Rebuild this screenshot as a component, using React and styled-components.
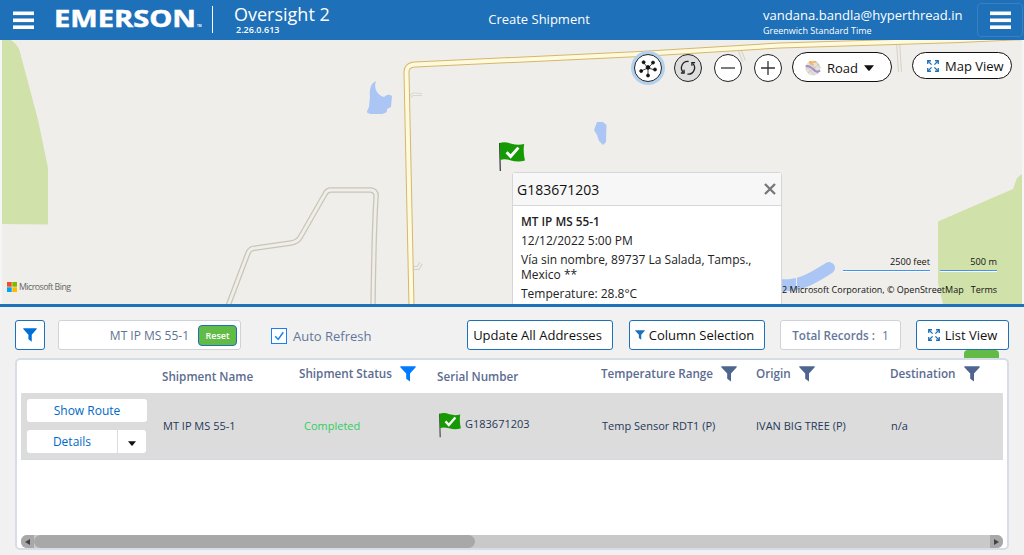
import React from "react";
import styled, { createGlobalStyle } from "styled-components";

const GlobalStyle = createGlobalStyle`
  * { box-sizing: border-box; }
  body {
    margin: 0;
    background: #f1f1f1;
    font-family: "Open Sans", sans-serif;
    font-size: 13px;
    color: #111;
  }
  button { font-family: inherit; margin: 0; padding: 0; white-space: nowrap; }
`;

const Page = styled.div`
  display: flex;
  flex-direction: column;
  width: 1024px;
  height: 555px;
  overflow: hidden;
`;

/* ---------- header ---------- */

const Header = styled.header`
  display: flex;
  align-items: flex-start;
  height: 40px;
  background: #1e70b8;
  color: #fff;
  flex: none;
`;

const MenuButton = styled.button`
  display: flex;
  align-items: center;
  justify-content: center;
  width: ${(p) => (p.$framed ? "46px" : "21px")};
  height: ${(p) => (p.$framed ? "34px" : "18px")};
  margin: ${(p) => (p.$framed ? "3px 0 0 0" : "11px 0 0 13px")};
  border: ${(p) => (p.$framed ? "1px solid #3a7fc0" : "none")};
  border-radius: 4px;
  background: transparent;
`;

const Logo = styled.svg`
  width: 150px;
  height: 40px;
  margin-left: 20px;
  fill: #fff;
  text {
    font-family: "Open Sans", sans-serif;
    font-weight: 700;
  }
`;

const Divider = styled.div`
  width: 1px;
  height: 27px;
  margin: 6px 0 0 8px;
  background: #fff;
`;

const Brand = styled.div`
  width: 230px;
  margin-left: 21px;
`;

const Product = styled.div`
  height: 25px;
  line-height: 29px;
  font-size: 18px;
`;

const Version = styled.div`
  padding-left: 2px;
  height: 10px;
  line-height: 10px;
  font-size: 9px;
  font-weight: 600;
`;

const PageTitle = styled.div`
  width: 150px;
  height: 40px;
  line-height: 39px;
  text-align: center;
  font-size: 13px;
`;

const Account = styled.div`
  width: 214px;
  margin-left: 149px;
`;

const Email = styled.div`
  height: 24px;
  line-height: 31px;
  font-size: 13.05px;
`;

const Zone = styled.div`
  height: 13px;
  line-height: 14px;
  font-size: 9px;
  font-weight: 500;
`;

/* ---------- map ---------- */

const MapArea = styled.section`
  position: relative;
  height: 267px;
  flex: none;
  overflow: hidden;
  background: #efeeea;
  border-bottom: 3px solid #1e70b8;
`;

const MapCanvas = styled.svg`
  position: absolute;
  left: 0;
  top: 0;
`;

const MapControls = styled.div`
  position: absolute;
  top: 12px;
  right: 12px;
  display: flex;
  align-items: flex-start;
  gap: 12px;
`;

const RoundButton = styled.button`
  display: flex;
  align-items: center;
  justify-content: center;
  width: 28px;
  height: 28px;
  margin-top: 2px;
  border: 1px solid #222;
  border-radius: 50%;
  background: ${(p) => (p.$muted ? "#dedede" : "#fff")};
  box-shadow: ${(p) => (p.$active ? "0 0 0 3px #b3d1ef" : "none")};
`;

const PillButton = styled.button`
  display: flex;
  align-items: center;
  width: 100px;
  height: ${(p) => p.$h}px;
  margin-left: ${(p) => p.$ml}px;
  padding-left: ${(p) => p.$pl}px;
  padding-top: ${(p) => p.$pt || 0}px;
  gap: ${(p) => p.$gap}px;
  border: 1px solid #111;
  border-radius: 16px;
  background: #fff;
  font-size: ${(p) => p.$fs}px;
  color: #111;
`;

const MapFlag = styled.div`
  position: absolute;
  left: 498px;
  top: 101px;
`;

const BingMark = styled.div`
  position: absolute;
  left: 7px;
  top: 241px;
  display: flex;
  align-items: center;
  gap: 2px;
  height: 12px;
  font-size: 8.8px;
  letter-spacing: -0.55px;
  color: #666;
`;

const ScaleBars = styled.div`
  position: absolute;
  right: 27px;
  top: 215px;
  display: flex;
  gap: 10px;
`;

const ScaleBar = styled.div`
  width: ${(p) => p.$w}px;
  height: 17px;
  line-height: 13px;
  text-align: right;
  font-size: 9.2px;
  color: #111;
  border-bottom: 1px solid #fff;
  box-shadow: inset 0 -1px 0 #3c96f0;
`;

const Copyright = styled.div`
  position: absolute;
  right: 27px;
  top: 243px;
  display: flex;
  gap: 7px;
  height: 13px;
  line-height: 13px;
  font-size: 9px;
  white-space: nowrap;
  color: #111;
`;

const InfoCard = styled.article`
  position: absolute;
  left: 512px;
  top: 132px;
  width: 270px;
  height: 150px;
  border: 1px solid #d6d6d6;
  border-radius: 3px;
  background: #fff;
`;

const CardHead = styled.div`
  display: flex;
  align-items: center;
  justify-content: space-between;
  height: 33px;
  padding: 0 5px 0 4px;
  border-bottom: 1px solid #d6d6d6;
  background: #f7f7f7;
  font-size: 14px;
  font-weight: 500;
`;

const CardBody = styled.div`
  padding: 7px 8px;
  font-size: 12px;
  color: #222;
`;

const CardLine = styled.div`
  line-height: 15px;
  margin-bottom: 4px;
  padding-top: ${(p) => (p.$first ? "1px" : "0")};
  font-size: ${(p) => (p.$first ? 11.75 : 12)}px;
  font-weight: ${(p) => (p.$first ? 600 : 400)};
  white-space: pre-line;
`;

/* ---------- toolbar ---------- */

const Toolbar = styled.div`
  display: flex;
  align-items: flex-start;
  height: 51px;
  padding: 13px 15px 0;
  flex: none;
`;

const ToolButton = styled.button`
  display: flex;
  align-items: center;
  justify-content: center;
  gap: ${(p) => p.$gap || 4}px;
  width: ${(p) => p.$w}px;
  height: 30px;
  margin-left: ${(p) => p.$ml || 0}px;
  padding-right: ${(p) => p.$pr || 0}px;
  border: 1px solid #1e70b8;
  border-radius: 3px;
  background: #fff;
  font-size: 13px;
  color: #111;
`;

const SearchBox = styled.div`
  display: flex;
  align-items: center;
  justify-content: flex-end;
  gap: 9px;
  width: 183px;
  height: 30px;
  margin-left: 13px;
  padding-right: 3px;
  border: 1px solid #cfd2d8;
  border-radius: 3px;
  background: #fff;
  font-size: 12px;
  color: #5f7392;
`;

const ResetButton = styled.button`
  width: 39px;
  height: 21px;
  border: 1px solid #1e70b8;
  border-radius: 4px;
  background: #62bb46;
  font-size: 9px;
  font-weight: 600;
  color: #fff;
`;

const Toggle = styled.label`
  display: flex;
  align-items: center;
  gap: 6px;
  width: 196px;
  height: 16px;
  margin: 8px 0 0 30px;
  font-size: 13px;
  color: #64779b;
`;

const RecordCount = styled.div`
  display: flex;
  align-items: center;
  justify-content: center;
  gap: 7px;
  width: 121px;
  height: 30px;
  margin-left: 15px;
  border: 1px solid #cfd2d8;
  border-radius: 3px;
  background: #fff;
  font-size: 12px;
  color: #64779b;
  b { font-size: 11.7px; font-weight: 600; }
`;

/* ---------- table ---------- */

const TableWrap = styled.section`
  position: relative;
  height: 192px;
  margin: 0 15px;
  flex: none;
`;

const GreenTab = styled.div`
  position: absolute;
  right: 10px;
  top: -8px;
  width: 35px;
  height: 10px;
  border-radius: 4px 4px 0 0;
  background: #62bb46;
`;

const Panel = styled.div`
  position: relative;
  display: flex;
  flex-direction: column;
  height: 192px;
  padding: 0 4px;
  border: 2px solid #d8dce6;
  border-radius: 5px;
  background: #fff;
`;

const Grid = styled.div`
  display: grid;
  grid-template-columns: 141px 137px 138px 164px 154px 135px 113px;
  width: 982px;
`;

const HeadRow = styled(Grid)`
  height: 33px;
`;

const HeadCell = styled.div`
  display: flex;
  align-items: flex-start;
  gap: 8px;
  padding-top: 6px;
  padding-left: ${(p) => p.$pl || 0}px;
  font-size: 11.7px;
  font-weight: 600;
  color: #5c6c90;
  line-height: ${(p) => (p.$filtered ? 15 : 21)}px;
  white-space: nowrap;
`;

const BodyRow = styled(Grid)`
  height: 67px;
  background: #dcdcdc;
  border-bottom: 1px solid #d5d9e3;
`;

const Cell = styled.div`
  display: flex;
  align-items: center;
  padding-left: ${(p) => p.$pl || 1}px;
  padding-bottom: 2px;
  font-size: 11px;
  color: ${(p) => p.$color || "#253858"};
  white-space: nowrap;
`;

const Serial = styled.span`
  margin: 0 0 3px 3px;
`;

const Actions = styled.div`
  display: flex;
  flex-direction: column;
  gap: 8px;
  padding: 6px 0 0 6px;
`;

const ActionButton = styled.button`
  width: ${(p) => p.$w}px;
  height: 23px;
  border: 0;
  border-radius: ${(p) => p.$r || "3px"};
  background: #fff;
  font-size: 12px;
  color: #0068c9;
`;

const SplitButton = styled.div`
  display: flex;
  gap: 1px;
`;

const Scrollbar = styled.div`
  display: flex;
  align-items: center;
  justify-content: space-between;
  width: 982px;
  height: 13px;
  margin-top: auto;
  border-radius: 6px;
  background: #c9c9c9;
`;

const ScrollArrow = styled.div`
  display: flex;
  align-items: center;
  justify-content: center;
  width: 13px;
  height: 13px;
  border-radius: ${(p) => (p.$right ? "0 6px 6px 0" : "6px 0 0 6px")};
  background: #a8a8a8;
`;

const ScrollThumb = styled.div`
  width: 441px;
  height: 13px;
  margin-right: auto;
  border-radius: 7px;
  background: #a8a8a8;
`;

/* ---------- drawings ---------- */

const Bars = () => (
  <svg width="21" height="18" fill="#fff">
    <rect y="0.5" width="21" height="3.6" />
    <rect y="7.5" width="21" height="3.6" />
    <rect y="14.4" width="21" height="3.6" />
  </svg>
);

const Funnel = ({ w = 16, h = 16, color = "#4f6590" }) => (
  <svg width={w} height={h} viewBox="0 0 16 16" preserveAspectRatio="none" fill={color}>
    <path d="M0.3 0.3H15.7V1.2L10 7.6V15.6L6.2 12.8V7.6L0.3 1.2Z" />
  </svg>
);

const Caret = ({ w = 10, h = 6 }) => (
  <svg width={w} height={h} viewBox="0 0 10 6" fill="#111">
    <path d="M0 0.3H10L5.7 5.4Q5 6 4.3 5.4Z" />
  </svg>
);

const Flag = ({ w, h }) => (
  <svg width={w} height={h} viewBox="0 0 28 31">
    <path d="M1.6 2L2.3 30" stroke="#333" strokeWidth="1.2" fill="none" />
    <path d="M1.6 2C6 0.6 9.5 1.5 13.5 2.8C18 4 22 4 26.2 3C25.2 8 25.8 14.5 27 19.4C22.5 21 17.5 20.8 13 19.4C9 18.2 5.5 18 2.2 19Z" fill="#159a04" />
    <path d="M8.6 11.2L12.6 15.5L20.4 6.6" stroke="#fff" strokeWidth="2.9" fill="none" />
  </svg>
);

const Expand = () => (
  <svg width="12" height="12" viewBox="0 0 13 13" fill="none" stroke="#1e70b8" strokeWidth="1.4">
    <path d="M0.8 4.3V0.8H4.3M8.7 0.8H12.2V4.3M12.2 8.7V12.2H8.7M4.3 12.2H0.8V8.7" />
    <path d="M1 1L5 5M12 1L8 5M12 12L8 8M1 12L5 8" />
  </svg>
);

const Cluster = () => (
  <svg width="20" height="20" viewBox="0 0 20 20" fill="#111" stroke="#111" strokeWidth="0.8">
    <path d="M10 10L5.8 4.9M10 10L15 4.9M10 10L17 12M10 10V17.5M10 10L3 13" />
    <circle cx="10" cy="9.4" r="1.9" />
    <circle cx="5.600" cy="4.2" r="1.5" />
    <circle cx="15" cy="4.600" r="1.5" />
    <circle cx="17" cy="11.5" r="1.5" />
    <circle cx="10" cy="17.5" r="1.5" />
    <circle cx="3.200" cy="13" r="1.5" />
  </svg>
);

const Refresh = () => (
  <svg width="18" height="18" viewBox="0 0 18 18" fill="none" stroke="#222" strokeWidth="1.3">
    <path d="M9.600 2.5A6.300 6.300 0 0 0 4.300 13.200M8.400 15.100A6.300 6.300 0 0 0 13.700 4.400" />
    <path d="M5.100 10.800V14H1.900M12.900 6.800V3.600H16.100" />
  </svg>
);

const Sign = ({ plus }) => (
  <svg width="14" height="14" viewBox="0 0 14 14" stroke="#333" strokeWidth="1.3">
    <path d={plus ? "M0 7H14M7 0V14" : "M0 7H14"} />
  </svg>
);

const Globe = () => (
  <svg width="16" height="16" viewBox="0 0 16 16">
    <circle cx="8" cy="8" r="7.6" fill="#e4e1d7" />
    <path d="M5 1L13 14M1.5 6L9 15M3 13L14 4M0.8 9.5L9 1M10 0.9L15.3 8" stroke="#c6c2b8" strokeWidth="0.7" fill="none" />
    <path d="M4 1.8C8 3 10 1.8 11.2 1.5M4 2.2L8.5 5" stroke="#f4b45e" strokeWidth="1.5" fill="none" />
    <path d="M0.6 6.3C4 4.9 6 7 8 9C10 11.4 12.5 12.7 15 10.6" stroke="#a68bd1" strokeWidth="2" fill="none" />
  </svg>
);

const Close = () => (
  <svg width="12" height="12" viewBox="0 0 12 12" stroke="#777" strokeWidth="2.3">
    <path d="M1 1L11 11M11 1L1 11" />
  </svg>
);

const CheckSquare = () => (
  <svg width="16" height="16" viewBox="0 0 16 16" fill="#fff" stroke="#1681f5">
    <rect x="0.5" y="0.5" width="15" height="15" />
    <path d="M4.2 8.2L7.2 11.4L12.3 4.2" fill="none" strokeWidth="1.5" />
  </svg>
);

const DoubleRoad = ({ d, edge, fill, outer, inner }) => (
  <>
    <path d={d} fill="none" stroke={edge} strokeWidth={outer} />
    <path d={d} fill="none" stroke={fill} strokeWidth={inner} />
  </>
);

const MapDrawing = () => (
  <MapCanvas width="1024" height="264" viewBox="0 40 1024 264">
    <path d="M2 40H11Q18 45 20 52L38 120L48 168V224.5L2 224Z" fill="#d0e1aa" />
    <path d="M938 221.5L1013 189L1017 178L1022 174V304H943L938 283Z" fill="#d0e1aa" />
    <path d="M376 81C371 83 369 89 370 97C369 103 370 107 367 111Q366 113 371 114H382Q388 113 387 109L391 107L392 96Q388 93 384 97C378 96 373 88 376 81Z" fill="#abc6f5" />
    <path d="M597 122L603 122L606.500 125L606 142L603 145L599 141L597 135L594 130Z" fill="#abc6f5" />
    <path d="M778 285C800 287 813 278 829 268" fill="none" stroke="#abc6f5" strokeWidth="12" strokeLinecap="round" />
    <path d="M796.500 277V291" stroke="#efeeea" strokeWidth="1" />
    <DoubleRoad d="M228 306L248 253Q250 248 256 248L291 243Q298 242 301 236L325 194Q327 190 331 190L371 190Q377 191 376 198Q374 230 373 306" edge="#cbc5b5" fill="#efeeea" outer="5.400" inner="2.8" />
    <DoubleRoad d="M410 97L413 94L422 94.500" edge="#d6d1c5" fill="#efeeea" outer="3" inner="1.3" />
    <DoubleRoad d="M412 268L418 268L421 263" edge="#d6d1c5" fill="#efeeea" outer="4" inner="2" />
    <DoubleRoad d="M740 51L744 61" edge="#d6d1c5" fill="#efeeea" outer="4" inner="2" />
    <DoubleRoad d="M898 42L900 72" edge="#d6d1c5" fill="#efeeea" outer="4" inner="2" />
    <DoubleRoad d="M411.500 306L406.500 73Q406 65 415 64.500L640 54L780 45.500L960 40L1024 37" edge="#d5b66f" fill="#fffadb" outer="6" inner="4" />
    <path d="M0 40H2V304H0ZM1022 40H1024V304H1022Z" fill="#f5f5f5" />
  </MapCanvas>
);

const columns = [
  { label: "Shipment Name" },
  { label: "Shipment Status", filter: "#007bff" },
  { label: "Serial Number" },
  { label: "Temperature Range", filter: "#4f6590" },
  { label: "Origin", filter: "#4f6590", inset: 1 },
  { label: "Destination", filter: "#4f6590" },
];

export default function App() {
  return (
    <Page>
      <GlobalStyle />
      <Header>
        <MenuButton><Bars /></MenuButton>
        <Logo>
          <text x="0" y="27.300" fontSize="23.500" stroke="#fff" strokeWidth="0.500" textLength="142" lengthAdjust="spacingAndGlyphs">EMERSON</text>
          <text x="143" y="27" fontSize="3">TM</text>
        </Logo>
        <Divider />
        <Brand>
          <Product>Oversight 2</Product>
          <Version>2.26.0.613</Version>
        </Brand>
        <PageTitle>Create Shipment</PageTitle>
        <Account>
          <Email>vandana.bandla@hyperthread.in</Email>
          <Zone>Greenwich Standard Time</Zone>
        </Account>
        <MenuButton $framed><Bars /></MenuButton>
      </Header>

      <MapArea>
        <MapDrawing />
        <MapFlag><Flag w={28} h={31} /></MapFlag>
        <BingMark>
          <svg width="10" height="10">
            <rect width="4.700" height="4.700" fill="#f25022" />
            <rect x="5.300" width="4.700" height="4.700" fill="#7fba00" />
            <rect y="5.300" width="4.700" height="4.700" fill="#00a4ef" />
            <rect x="5.300" y="5.300" width="4.700" height="4.700" fill="#ffb900" />
          </svg>
          Microsoft Bing
        </BingMark>
        <ScaleBars>
          <ScaleBar $w={87}>2500 feet</ScaleBar>
          <ScaleBar $w={57}>500 m</ScaleBar>
        </ScaleBars>
        <Copyright>
          <span>© 2022 Microsoft Corporation, © OpenStreetMap</span>
          <span>Terms</span>
        </Copyright>
        <InfoCard>
          <CardHead>G183671203<Close /></CardHead>
          <CardBody>
            <CardLine $first>MT IP MS 55-1</CardLine>
            <CardLine>12/12/2022 5:00 PM</CardLine>
            <CardLine>{"Vía sin nombre, 89737 La Salada, Tamps.,\nMexico **"}</CardLine>
            <CardLine>Temperature: 28.8°C</CardLine>
          </CardBody>
        </InfoCard>
        <MapControls>
          <RoundButton $active><Cluster /></RoundButton>
          <RoundButton $muted><Refresh /></RoundButton>
          <RoundButton><Sign /></RoundButton>
          <RoundButton><Sign plus /></RoundButton>
          <PillButton $h={30} $ml={-2} $pl={12} $pt={1} $gap={6} $fs={13}>
            <Globe />Road<Caret />
          </PillButton>
          <PillButton $h={27} $ml={8} $pl={14} $gap={6} $fs={13}>
            <Expand />Map View
          </PillButton>
        </MapControls>
      </MapArea>

      <Toolbar>
        <ToolButton $w={30}><Funnel w={14} h={14} color="#0070d8" /></ToolButton>
        <SearchBox>
          <span>MT IP MS 55-1</span>
          <ResetButton>Reset</ResetButton>
        </SearchBox>
        <Toggle><CheckSquare />Auto Refresh</Toggle>
        <ToolButton $w={146} $pr={5}>Update All Addresses</ToolButton>
        <ToolButton $w={136} $ml={16} $pr={5}><Funnel w={10} h={10} color="#1e70b8" />Column Selection</ToolButton>
        <RecordCount><b>Total Records :</b>1</RecordCount>
        <ToolButton $w={93} $ml={15} $gap={5}><Expand />List View</ToolButton>
      </Toolbar>

      <TableWrap>
        <GreenTab />
        <Panel>
          <HeadRow>
            <HeadCell />
            {columns.map((c) => (
              <HeadCell key={c.label} $filtered={!!c.filter} $pl={c.inset}>
                {c.label}
                {c.filter && <Funnel color={c.filter} />}
              </HeadCell>
            ))}
          </HeadRow>
          <BodyRow>
            <Actions>
              <ActionButton $w={120}>Show Route</ActionButton>
              <SplitButton>
                <ActionButton $w={90} $r="3px 0 0 3px">Details</ActionButton>
                <ActionButton $w={28} $r="0 3px 3px 0"><Caret w={8} h={5} /></ActionButton>
              </SplitButton>
            </Actions>
            <Cell>MT IP MS 55-1</Cell>
            <Cell $pl={5} $color="#2fce5c">Completed</Cell>
            <Cell><Flag w={24} h={26} /><Serial>G183671203</Serial></Cell>
            <Cell>Temp Sensor RDT1 (P)</Cell>
            <Cell>IVAN BIG TREE (P)</Cell>
            <Cell>n/a</Cell>
          </BodyRow>
          <Scrollbar>
            <ScrollArrow><svg width="5" height="6"><path d="M5 0V6L0 3Z" fill="#444" /></svg></ScrollArrow>
            <ScrollThumb />
            <ScrollArrow $right><svg width="5" height="6"><path d="M0 0V6L5 3Z" fill="#444" /></svg></ScrollArrow>
          </Scrollbar>
        </Panel>
      </TableWrap>
    </Page>
  );
}
